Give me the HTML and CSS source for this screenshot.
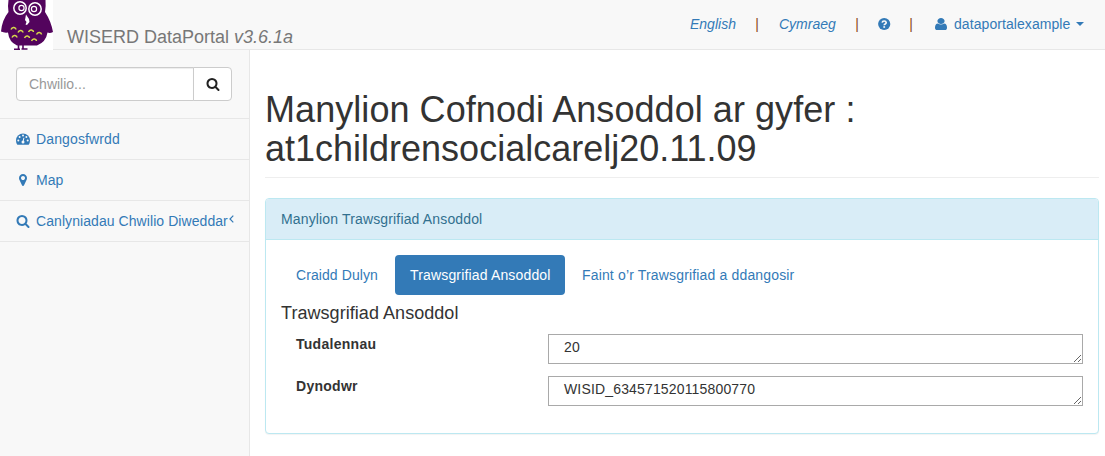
FILE: index.html
```html
<!DOCTYPE html>
<html lang="cy">
<head>
<meta charset="utf-8">
<title>WISERD DataPortal</title>
<link rel="stylesheet" href="styles.css">
</head>
<body>
<header class="navbar">
  <a class="brand">
    <svg class="owl" viewBox="0 0 53 50">
      <rect width="53" height="50" fill="#fff"/>
      <path fill="#53045d" d="M8.500 0H45.500Q46 6 45 12Q51 21 53 32Q50 33.500 47.500 32.500Q46 42 37 45.500H17Q9 42 8 32.500Q4 33 1 31.500Q2 20 8.500 12Q7.500 6 8.500 0Z"/>
      <path fill="#fff" d="M26 14.500L29 19L29.500 22L27 25L25.500 24.500L26.500 22L25 20Z"/>
      <g fill="none" stroke="#fff" stroke-width="1.500"><circle cx="20" cy="8" r="6.200"/><circle cx="35" cy="9" r="6.200"/></g>
      <g fill="none" stroke="#fff" stroke-width="1.200"><circle cx="21.500" cy="8" r="2.600"/><circle cx="34" cy="9" r="2.600"/></g>
      <path fill="none" stroke="#d5d84b" stroke-width="1.500" d="M11 29.500q1-2.500 3-2t2 2M18 32.500q1-2.500 3-2t2 2M28.500 32q1-2.500 3-2t2 2M36.500 34.500q1-2.500 3-2t2 2M12 37.500q1-2.500 3-2t2 2M24.500 38q1-2.500 3-2t2 2M31.500 41q1-2.500 3-2t2 2"/>
      <path fill="none" stroke="#53045d" stroke-width="1.600" d="M18.500 45v3.500M23 45v3.500M14 49.200h6M21.500 49h6"/>
    </svg>
    <span class="brand-name">WISERD DataPortal <i>v3.6.1a</i></span>
  </a>
  <nav class="top-links">
    <a class="english"><i>English</i></a><span class="bar">|</span>
    <a class="cymraeg"><i>Cymraeg</i></a><span class="bar">|</span>
    <a class="help"><svg class="icon" viewBox="0 0 14 14"><circle cx="7.200" cy="7" r="6.100" fill="currentColor"/><path d="M5.200 5.600Q5.400 4 7.200 4T9.200 5.500Q9.200 6.300 8.200 6.900T7.200 8.300" fill="none" stroke="#f8f8f8" stroke-width="1.700"/><path fill="#f8f8f8" d="M6.300 9.200h1.800v1.600H6.300z"/></svg></a><span class="bar">|</span>
    <a class="account"><svg class="user-icon" viewBox="256 128 1280 1536" preserveAspectRatio="none"><path fill="currentColor" d="M1536 1399q0 109-62.500 187t-150.500 78h-854q-88 0-150.500-78t-62.500-187q0-85 8.500-160.500t31.500-152 58.500-131 94-89 134.500-34.500q131 128 313 128t313-128q76 0 134.500 34.500t94 89 58.500 131 31.500 152 8.500 160.500zm-256-887q0 159-112.500 271.500t-271.500 112.500-271.500-112.500-112.500-271.500 112.500-271.500 271.500-112.500 271.500 112.500 112.500 271.500z"/></svg><span class="account-name">dataportalexample</span><span class="caret"></span></a>
  </nav>
</header>
<div class="layout">
  <aside class="sidebar">
    <div class="search">
      <input class="search-input" type="text" placeholder="Chwilio...">
      <button class="search-button" aria-label="Chwilio"><svg class="icon" viewBox="0 0 1792 1792"><path fill="currentColor" d="M1216 832q0-185-131.500-316.500t-316.500-131.500-316.500 131.500-131.500 316.500 131.500 316.500 316.500 131.500 316.500-131.500 131.500-316.500zm512 832q0 52-38 90t-90 38q-54 0-90-38l-343-342q-179 124-399 124-143 0-273.500-55.500t-225-150-150-225-55.500-273.500 55.500-273.500 150-225 225-150 273.500-55.500 273.500 55.500 225 150 150 225 55.500 273.500q0 220-124 399l343 343q37 37 37 90z"/></svg></button>
    </div>
    <a class="side-item"><svg class="icon" viewBox="0 0 14 14"><path fill="currentColor" d="M1.300 12.800Q0 10.800 0 8.500A7 7 0 0 1 14 8.500Q14 10.800 12.700 12.800Z"/><g fill="#f8f8f8"><circle cx="2.300" cy="8.500" r="1"/><circle cx="3.600" cy="5" r="1"/><circle cx="7" cy="3.500" r="1"/><circle cx="10.400" cy="5" r="1"/><circle cx="11.700" cy="8.500" r="1"/><circle cx="7" cy="10" r="1.500"/></g><path d="M7 10L7.900 5.800" stroke="#f8f8f8"/></svg><span class="dash-label">Dangosfwrdd</span></a>
    <a class="side-item"><svg class="icon" viewBox="0 0 1792 1792"><path fill="currentColor" d="M1152 640q0-106-75-181t-181-75-181 75-75 181 75 181 181 75 181-75 75-181zm256 0q0 109-33 179l-364 774q-16 33-47.500 52t-67.500 19-67.500-19-46.500-52l-365-774q-33-70-33-179 0-212 150-362t362-150 362 150 150 362z"/></svg><span>Map</span></a>
    <a class="side-item"><svg class="icon" viewBox="0 0 1792 1792"><path fill="currentColor" d="M1216 832q0-185-131.500-316.500t-316.500-131.500-316.500 131.500-131.500 316.500 131.500 316.500 316.500 131.500 316.500-131.500 131.500-316.500zm512 832q0 52-38 90t-90 38q-54 0-90-38l-343-342q-179 124-399 124-143 0-273.500-55.500t-225-150-150-225-55.500-273.500 55.500-273.500 150-225 225-150 273.500-55.500 273.500 55.500 225 150 150 225 55.500 273.500q0 220-124 399l343 343q37 37 37 90z"/></svg><span class="recent-label">Canlyniadau Chwilio Diweddar</span><svg class="arrow" viewBox="0 0 5 8"><path d="M4.300.700L1 4L4.300 7.300" fill="none" stroke="currentColor" stroke-width="1.200"/></svg></a>
  </aside>
  <main class="content">
    <h1 class="page-title"><span class="title-first">Manylion Cofnodi Ansoddol ar gyfer :</span><br>at1childrensocialcarelj20.11.09</h1>
    <section class="panel">
      <div class="panel-heading">Manylion Trawsgrifiad Ansoddol</div>
      <div class="panel-body">
        <div class="tabs">
          <a class="tab tab-core">Craidd Dulyn</a>
          <a class="tab tab-active">Trawsgrifiad Ansoddol</a>
          <a class="tab tab-amount">Faint o’r Trawsgrifiad a ddangosir</a>
        </div>
        <h4 class="section-title">Trawsgrifiad Ansoddol</h4>
        <div class="field"><label class="label" for="pages">Tudalennau</label><textarea class="value" id="pages">20</textarea></div>
        <div class="field"><label class="label" for="identifier">Dynodwr</label><textarea class="value" id="identifier">WISID_634571520115800770</textarea></div>
      </div>
    </section>
  </main>
</div>
</body>
</html>
```
FILE: styles.css
```css
* { box-sizing: border-box; }
body {
  margin: 0;
  height: 456px;
  overflow: hidden;
  display: flex;
  flex-direction: column;
  background: #f8f8f8;
  color: #333;
  font: 14px/20px "Liberation Sans", Arial, sans-serif;
}
a { color: #337ab7; }
.navbar {
  display: flex;
  justify-content: space-between;
  height: 50px;
  flex: none;
  border-bottom: 1px solid #e7e7e7;
}
.brand { display: flex; height: 50px; color: #777; }
.owl { width: 53px; height: 50px; }
.brand-name { padding: 27px 0 0 14px; font-size: 18px; white-space: nowrap; }
.top-links { display: flex; align-items: center; height: 48px; padding-right: 21px; }
.bar { color: #8a4b18; width: 4px; text-align: center; }
.english { width: 65px; }
.cymraeg { width: 76px; margin-left: 20px; }
.help { display: flex; width: 32px; margin-left: 18px; }
.account { display: flex; align-items: center; margin-left: 22px; }
.icon { width: 14px; height: 14px; flex: none; }
.user-icon { width: 12px; height: 12px; flex: none; }
.account-name { width: 117px; margin-left: 7px; letter-spacing: .07px; }
.caret { margin-left: 5px; border: 4px solid transparent; border-top-color: #337ab7; border-bottom: 0; }
.layout { display: flex; flex: 1; min-height: 0; }
.sidebar { width: 250px; flex: none; border-right: 1px solid #e7e7e7; padding-top: 1px; }
.search { display: flex; height: 68px; padding: 16px 17px 17px 16px; border-bottom: 1px solid #e7e7e7; }
.search-input {
  width: 178px;
  height: 34px;
  padding: 6px 12px;
  border: 1px solid #ccc;
  border-radius: 4px 0 0 4px;
  font: inherit;
  box-shadow: inset 0 1px 1px rgba(0, 0, 0, .075);
}
.search-input::placeholder { color: #999; }
.search-button {
  width: 39px;
  height: 34px;
  margin-left: -1px;
  display: flex;
  align-items: center;
  border: 1px solid #ccc;
  border-radius: 0 4px 4px 0;
  background: #fff;
  color: #222;
  padding: 0 0 0 12px;
}
.side-item {
  display: flex;
  align-items: center;
  height: 41px;
  padding-left: 16px;
  gap: 6px;
  border-bottom: 1px solid #e7e7e7;
  white-space: nowrap;
}
.dash-label { letter-spacing: .13px; }
.recent-label { width: 192px; letter-spacing: .07px; }
.arrow { width: 5px; height: 8px; margin: -4px 0 0 -5px; }
.content { flex: 1; padding: 40px 6px 0 15px; background: #fff; }
.page-title {
  height: 88px;
  margin: 0 0 20px;
  border-bottom: 1px solid #eee;
  font-size: 36px;
  font-weight: 400;
  line-height: 39px;
  white-space: nowrap;
}
.title-first { letter-spacing: .06px; }
.panel {
  height: 236px;
  border: 1px solid #bce8f1;
  border-radius: 4px;
  background: #fff;
  box-shadow: 0 1px 1px rgba(0, 0, 0, .05);
}
.panel-heading {
  height: 41px;
  padding: 10px 15px;
  border-bottom: 1px solid #bce8f1;
  border-radius: 3px 3px 0 0;
  background: #d9edf7;
  color: #31708f;
  letter-spacing: .15px;
}
.panel-body { padding: 15px; }
.tabs { display: flex; gap: 2px; }
.tab { height: 40px; padding: 10px 15px; border-radius: 4px; white-space: nowrap; letter-spacing: .16px; }
.tab-core { width: 112px; letter-spacing: .08px; }
.tab-active { width: 170px; background: #337ab7; color: #fff; }
.section-title { margin: 8px 0 11px; font-size: 18px; font-weight: 400; line-height: 20px; letter-spacing: .05px; }
.field { display: flex; height: 30px; margin-bottom: 12px; padding-left: 15px; }
.label { width: 252px; font-weight: 700; letter-spacing: .28px; }
.value {
  display: block;
  flex: 1;
  height: 30px;
  border: 1px solid #a9a9a9;
  margin: 0;
  padding: 2px 15px;
  overflow: hidden;
  resize: both;
  color: #333;
  font: inherit;
  letter-spacing: .16px;
}
```
